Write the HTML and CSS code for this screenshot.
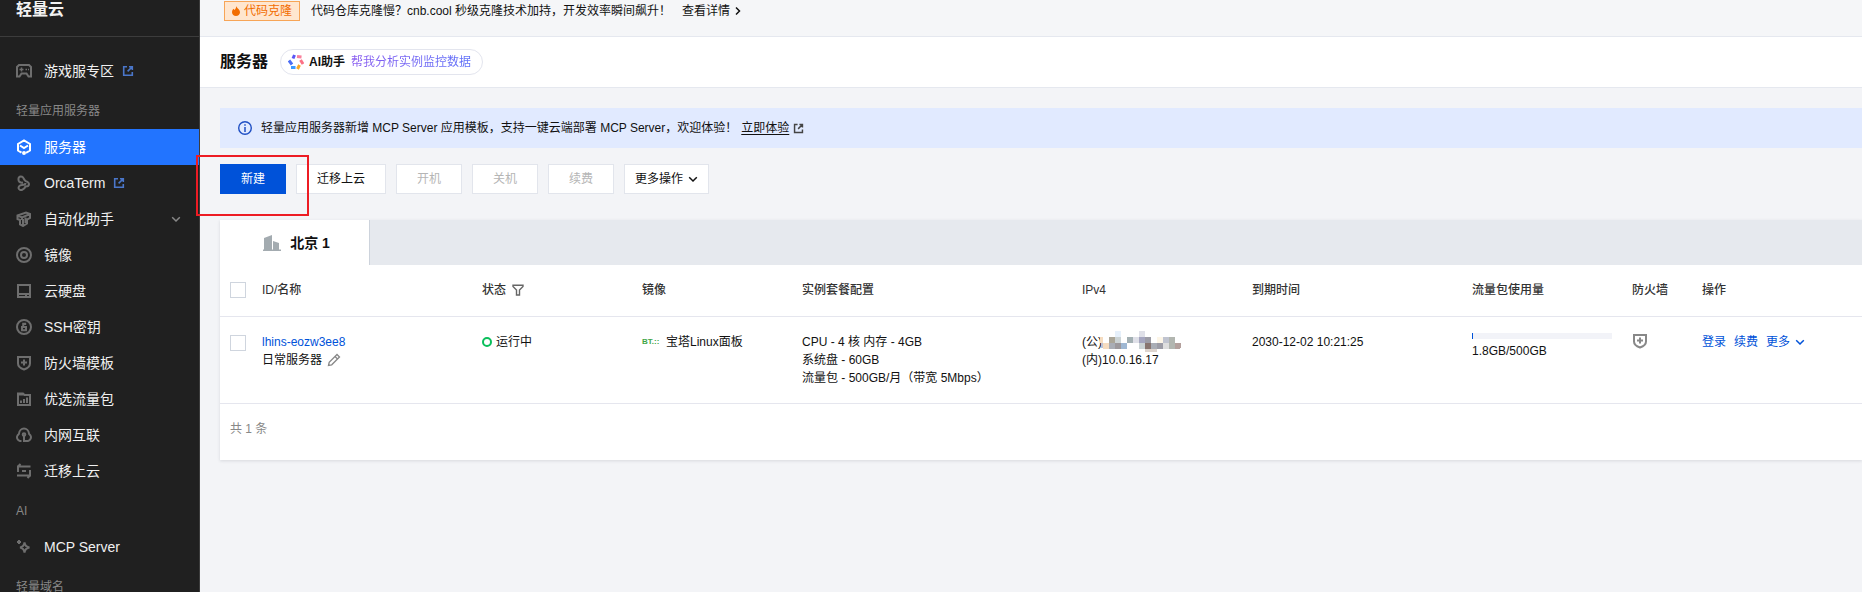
FILE: index.html
```
<!DOCTYPE html>
<html lang="zh-CN">
<head>
    <meta charset="UTF-8">
    <meta name="viewport" content="width=device-width, initial-scale=1.0">
    <title>服务器 - 轻量云</title>
    <link rel="stylesheet" href="styles.css">
</head>
<body>

<svg class="sprite" aria-hidden="true">
    <symbol id="icon-external" viewBox="0 0 12 12">
        <path d="M5 1.7H1.7v8.6h8.6V7M7 1.7h3.3V5M10.3 1.7L5.6 6.4" fill="none" stroke="currentColor" stroke-width="1.6"/>
    </symbol>
    <symbol id="icon-down" viewBox="0 0 10 10">
        <path d="M1.2 3.2L5 7l3.8-3.8" fill="none" stroke="currentColor" stroke-width="1.5"/>
    </symbol>
    <symbol id="icon-shield" viewBox="0 0 16 16">
        <path d="M2 2h12v6.500c0 3-2.500 4.800-6 6-3.500-1.200-6-3-6-6zM8 4.500v6M5 7.500h6" fill="none" stroke="currentColor" stroke-width="2"/>
    </symbol>
</svg>

<div class="layout">
    <nav class="sidebar">
        <div class="sidebar-title">轻量云</div>
        <div class="menu">
            <a class="menu-item" href="#">
                <svg class="menu-icon" viewBox="0 0 16 16"><path d="M3 2h10l2 2v9.500h-2.500L10.500 10.500h-5L3.500 13.500H1V4z"/><path d="M5.500 4.500v4M3.500 6.500h4M9.500 6.500h1.500M12 6.500h1" stroke-width="1.500"/></svg>
                <span>游戏服专区</span>
                <svg class="link-icon"><use href="#icon-external"/></svg>
            </a>
            <div class="menu-group">轻量应用服务器</div>
            <a class="menu-item active" href="#">
                <svg class="menu-icon" viewBox="0 0 16 16"><path d="M5.500 13.700L2 11.500V5L8 1.500 14 5v6.500l-4 2.400M4 6.500L8 9l4-2.500"/><circle cx="8" cy="14" r="1" /></svg>
                <span>服务器</span>
            </a>
            <a class="menu-item" href="#">
                <svg class="menu-icon" viewBox="0 0 16 16"><path d="M3 6.500C1.500 3 3.500.700 6 1.700c2 1 1.500 3 3.500 4.300 2 .800 3.500 1.300 3.500 3s-1.500 2.500-3.500 2.500c-1.500 3.500-5 4.500-6.500 2.500-1.200-2 .500-4 3-4 2 0 3.500-.500 3.500-2M3 6.500c1.200 1.300 2.700 1.300 4 1"/></svg>
                <span>OrcaTerm</span>
                <svg class="link-icon"><use href="#icon-external"/></svg>
            </a>
            <a class="menu-item" href="#">
                <svg class="menu-icon" viewBox="0 0 16 16"><path d="M1.500 4.500L10 1.500l4 1.500v4l-3 1.500v4L7 15l-3-1.500V9L1.500 8zM1.500 4.500L6 6.500 14 3M7 8v6M6 6.500V9M9.500 6.500V12"/></svg>
                <span>自动化助手</span>
                <svg class="menu-arrow"><use href="#icon-down"/></svg>
            </a>
            <a class="menu-item" href="#">
                <svg class="menu-icon" viewBox="0 0 16 16"><circle cx="8" cy="8" r="7"/><circle cx="8" cy="8" r="3"/></svg>
                <span>镜像</span>
            </a>
            <a class="menu-item" href="#">
                <svg class="menu-icon" viewBox="0 0 16 16"><path d="M2 2h12v12H2zM2 11h12M10 11v3"/></svg>
                <span>云硬盘</span>
            </a>
            <a class="menu-item" href="#">
                <svg class="menu-icon" viewBox="0 0 16 16"><circle cx="8" cy="8" r="7"/><path d="M6 8h4v3.200H6zM7.200 8V4.800h2V6"/></svg>
                <span>SSH密钥</span>
            </a>
            <a class="menu-item" href="#">
                <svg class="menu-icon"><use href="#icon-shield"/></svg>
                <span>防火墙模板</span>
            </a>
            <a class="menu-item" href="#">
                <svg class="menu-icon" viewBox="0 0 16 16"><path d="M2 2.500h5L8.500 4H14v10H2zM2 3.500h6M5 9.500V12M8 8v4M11 6.500V12"/></svg>
                <span>优选流量包</span>
            </a>
            <a class="menu-item" href="#">
                <svg class="menu-icon" viewBox="0 0 16 16"><path d="M5.500 14H4C1.500 13.500.300 10.500 1.500 8.500 2 7.500 3 7.300 3 6.500 3.300 3.500 5.500 1.500 8 1.500s4.700 2 5 5c0 .800 1 1 1.500 2 1.200 2-.200 5-2.500 5.500H8V8"/><circle cx="8" cy="7.500" r="1.300"/></svg>
                <span>内网互联</span>
            </a>
            <a class="menu-item" href="#">
                <svg class="menu-icon" viewBox="0 0 16 16"><path d="M2 9V3.500h12.500M2 3.500L4.500 1M14 7v5.500H1M14 12.500L11.500 15M6 8h4"/></svg>
                <span>迁移上云</span>
            </a>
            <div class="menu-group">AI</div>
            <a class="menu-item" href="#">
                <svg class="menu-icon" viewBox="0 0 16 16"><path d="M8.500 3.500C9 6.500 10 8 13.500 8.500 10 9 9 10.500 8.500 13.500 8 10.500 7 9 4 8.500 7 8 8 6.500 8.500 3.500zM3 1v4M1 3h4"/></svg>
                <span>MCP Server</span>
            </a>
            <div class="menu-group">轻量域名</div>
        </div>
    </nav>

    <main class="main">
        <div class="promo">
            <span class="promo-tag">
                <svg class="fire-icon" viewBox="0 0 8 10"><path d="M4.500 0C4.500 2 8 3.500 8 6.200 8 8.500 6.200 10 4 10S0 8.500 0 6.200C0 4.600 1 3.500 1.500 2.800L2.500 4C3.500 3 4.200 1.500 4.500 0z" fill="#f26d00"/></svg>
                代码克隆
            </span>
            <span>代码仓库克隆慢？cnb.cool 秒级克隆技术加持，开发效率瞬间飙升！</span>
            <a class="promo-link" href="#">查看详情
                <svg class="right-icon" viewBox="0 0 6 10"><path d="M1 1.500L4.500 5 1 8.500" fill="none" stroke="currentColor" stroke-width="1.500"/></svg>
            </a>
        </div>

        <header class="page-header">
            <h1>服务器</h1>
            <button type="button" class="ai-button">
                <svg class="ai-icon" viewBox="0 0 16 16" fill="none" stroke-width="3">
                    <path d="M6.500 1L5 4.500" stroke="#5a55f5"/>
                    <path d="M9 2.500l4.500.500" stroke="#f9809c"/>
                    <path d="M12.500 6l2.500 4" stroke="#fb7185"/>
                    <path d="M11.500 11L9.500 15" stroke="#f9a826"/>
                    <path d="M7.500 13.500H3" stroke="#3d9bff"/>
                    <path d="M4 10.500L1 6.500" stroke="#4c6ef5"/>
                </svg>
                <strong>AI助手</strong>
                <span class="ai-text">帮我分析实例监控数据</span>
            </button>
        </header>

        <div class="content">
            <div class="notice">
                <svg class="info-icon" viewBox="0 0 14 14"><circle cx="7" cy="7" r="6.300" fill="none" stroke="#1f4fc4" stroke-width="1.400"/><path d="M7 3.200v1.600M7 6v5" stroke="#1f4fc4" stroke-width="1.500"/></svg>
                <span>轻量应用服务器新增 MCP Server 应用模板，支持一键云端部署 MCP Server，欢迎体验！</span>
                <a href="#">立即体验</a>
                <svg class="notice-icon"><use href="#icon-external"/></svg>
            </div>

            <div class="toolbar">
                <div class="create">
                    <button type="button" class="btn btn-primary">新建</button>
                    <div class="highlight"></div>
                </div>
                <button type="button" class="btn">迁移上云</button>
                <button type="button" class="btn" disabled>开机</button>
                <button type="button" class="btn" disabled>关机</button>
                <button type="button" class="btn" disabled>续费</button>
                <button type="button" class="btn btn-more">更多操作 <svg class="arrow"><use href="#icon-down"/></svg></button>
            </div>

            <section class="card">
                <div class="tabs">
                    <button type="button" class="tab">
                        <svg class="city-icon" viewBox="0 0 18 16"><path d="M1 15V3l8-3v15zM10 15V6l6 2v7zM0 14.500h18V16H0z" fill="#a3abb0"/></svg>
                        北京 1
                    </button>
                </div>
                <table class="servers">
                    <colgroup>
                        <col class="col-check">
                        <col class="col-id">
                        <col class="col-status">
                        <col class="col-image">
                        <col class="col-spec">
                        <col class="col-ip">
                        <col class="col-expire">
                        <col class="col-usage">
                        <col class="col-firewall">
                        <col>
                    </colgroup>
                    <thead>
                        <tr>
                            <th class="check"><input type="checkbox" aria-label="全选"></th>
                            <th>ID/名称</th>
                            <th>
                                <div class="line">状态
                                    <svg class="filter-icon" viewBox="0 0 12 12"><path d="M1 1.200h10v1.300L7.500 6v5h-3V6L1 2.500z" fill="none" stroke="#666" stroke-width="1.400"/></svg>
                                </div>
                            </th>
                            <th>镜像</th>
                            <th>实例套餐配置</th>
                            <th>IPv4</th>
                            <th>到期时间</th>
                            <th>流量包使用量</th>
                            <th>防火墙</th>
                            <th>操作</th>
                        </tr>
                    </thead>
                    <tbody>
                        <tr>
                            <td class="check"><input type="checkbox" aria-label="选择 lhins-eozw3ee8"></td>
                            <td>
                                <a href="#">lhins-eozw3ee8</a>
                                <div class="line">日常服务器
                                    <svg class="edit-icon" viewBox="0 0 14 14"><path d="M1.500 12.500l.700-3.200L10 1.500l2.500 2.500-7.800 7.800zM8 3.500L10.500 6" fill="none" stroke="#888" stroke-width="1.300"/></svg>
                                </div>
                            </td>
                            <td><div class="line status"><i class="dot"></i>运行中</div></td>
                            <td>
                                <div class="line image">
                                    <span class="bt-logo">BT<small>.::</small></span>宝塔Linux面板
                                </div>
                            </td>
                            <td>CPU - 4 核 内存 - 4GB<br>系统盘 - 60GB<br>流量包 - 500GB/月（带宽 5Mbps）</td>
                            <td>
                                <div class="public-ip">(公)
                                    <svg class="mask" viewBox="0 0 81 21" shape-rendering="crispEdges">
                                        <path fill="#fff" d="M3 6h78v12H3z"/>
                                        <path fill="#e6f0fb" d="M15 0h6v6h-6z"/>
                                        <path fill="#dfe0e8" d="M39 0h6v6h-6zM33 6h6v6h-6z"/>
                                        <path fill="#f5dcc0" d="M0 6h3v6H0zM3 12h6v6H3z"/>
                                        <path fill="#bcc3d5" d="M1 12h2v5H1z"/>
                                        <path fill="#aba698" d="M9 6h6v6H9z"/>
                                        <path fill="#cbd3d5" d="M15 6h6v6h-6zM39 12h6v6h-6z"/>
                                        <path fill="#a3b0b3" d="M27 6h6v6h-6z"/>
                                        <path fill="#a5a6c0" d="M39 6h6v6h-6z"/>
                                        <path fill="#9c9ca6" d="M45 6h6v6h-6zM57 12h6v6h-6z"/>
                                        <path fill="#fdf6e8" d="M57 6h6v6h-6z"/>
                                        <path fill="#c0c4d0" d="M63 6h6v6h-6z"/>
                                        <path fill="#b2b6b0" d="M69 6h6v12h-6z"/>
                                        <path fill="#a9adb5" d="M9 12h6v6H9zM51 12h6v6h-6z"/>
                                        <path fill="#9c989c" d="M15 12h6v6h-6z"/>
                                        <path fill="#9fb8d3" d="M21 12h6v6h-6z"/>
                                        <path fill="#887570" d="M45 12h6v6h-6z"/>
                                        <path fill="#dedede" d="M63 12h6v6h-6z"/>
                                        <path fill="#b3a09c" d="M75 12h6v4l-2 2h-4z"/>
                                        <path fill="#ddd4ce" d="M45 18h12v3H45z"/>
                                    </svg>
                                </div>
                                (内)10.0.16.17
                            </td>
                            <td>2030-12-02 10:21:25</td>
                            <td>
                                <div class="usage"><div class="usage-bar" style="width: 0.36%"></div></div>
                                1.8GB/500GB
                            </td>
                            <td><svg class="firewall-icon"><use href="#icon-shield"/></svg></td>
                            <td>
                                <div class="line actions">
                                    <a href="#">登录</a>
                                    <a href="#">续费</a>
                                    <a href="#">更多 <svg class="arrow"><use href="#icon-down"/></svg></a>
                                </div>
                            </td>
                        </tr>
                    </tbody>
                </table>
                <div class="card-footer">共 1 条</div>
            </section>
        </div>
    </main>
</div>

</body>
</html>
```
FILE: styles.css
```
* {
    box-sizing: border-box;
}
body {
    margin: 0;
    overflow: hidden;
    font-family: "Liberation Sans", "Noto Sans CJK SC", sans-serif;
    font-size: 12px;
    line-height: 18px;
    color: #111;
    background-color: #f3f4f7;
}
a {
    color: #0052d9;
    text-decoration: none;
}
button {
    font: inherit;
    color: inherit;
    cursor: pointer;
}
svg {
    flex: none;
}
.sprite {
    position: absolute;
    width: 0;
    height: 0;
}
.layout {
    display: flex;
    height: 100vh;
}

/* sidebar */
.sidebar {
    flex: none;
    width: 200px;
    overflow: hidden;
    background-color: #202020;
    border-right: 1px solid #3c3c3c;
}
.sidebar-title {
    padding: 0 16px 16px;
    font-size: 16px;
    line-height: 20px;
    font-weight: bold;
    color: #f2f2f2;
    border-bottom: 1px solid #3c3c3c;
}
.menu {
    padding-top: 16px;
}
.menu-item {
    display: flex;
    align-items: center;
    height: 36px;
    padding: 0 18px 0 16px;
    font-size: 14px;
    color: #f0f0f0;
}
.menu-item.active {
    background-color: #2274ff;
    color: #fff;
}
.menu-icon {
    width: 16px;
    height: 16px;
    margin-right: 12px;
    color: #6e6e6e;
    fill: none;
    stroke: currentColor;
    stroke-width: 2;
}
.active .menu-icon {
    color: #fff;
}
.link-icon {
    width: 12px;
    height: 12px;
    margin-left: 8px;
    color: #4a76c9;
}
.menu-arrow {
    width: 10px;
    height: 10px;
    margin-left: auto;
    color: #888;
}
.menu-group {
    height: 40px;
    padding: 0 16px;
    line-height: 44px;
    color: #888;
}

/* top area */
.main {
    flex: 1;
    min-width: 0;
}
.promo {
    display: flex;
    align-items: flex-start;
    gap: 11px;
    height: 37px;
    padding: 1px 24px 0;
    line-height: 20px;
    background-color: #f5f6f8;
    border-bottom: 1px solid #e5e8ef;
}
.promo-tag {
    display: flex;
    align-items: center;
    gap: 4px;
    height: 20px;
    padding: 0 7px;
    color: #f26d00;
    background-color: #ffe6cf;
    border: 1px solid #f7a557;
}
.fire-icon {
    width: 8px;
    height: 10px;
}
.promo-link {
    display: flex;
    align-items: center;
    gap: 5px;
    color: #111;
}
.right-icon {
    width: 6px;
    height: 10px;
}
.page-header {
    display: flex;
    align-items: center;
    gap: 12px;
    height: 51px;
    padding: 0 20px;
    background-color: #fff;
    border-bottom: 1px solid #e5e8ef;
}
.page-header h1 {
    margin: 0;
    font-size: 16px;
    line-height: 24px;
}
.ai-button {
    display: flex;
    align-items: center;
    gap: 5px;
    height: 26px;
    padding: 0 11px 0 7px;
    background-color: #fff;
    border: 1px solid #e3e5ee;
    border-radius: 13px;
}
.ai-icon {
    width: 16px;
    height: 16px;
}
.ai-text {
    color: transparent;
    margin-left: 1px;
    background: linear-gradient(90deg, #8a5cf0, #5b6ef8);
    background-clip: text;
}
.content {
    padding: 20px 0 20px 20px;
}
.notice {
    display: flex;
    align-items: center;
    height: 40px;
    padding: 0 18px;
    background-color: #e1eaff;
}
.notice a {
    margin: 0 4px;
    color: #111;
    text-decoration: underline;
    text-underline-offset: 2px;
}
.info-icon {
    width: 14px;
    height: 14px;
    margin-right: 9px;
}
.notice-icon {
    width: 11px;
    height: 11px;
    color: #444;
}

/* buttons */
.toolbar {
    display: flex;
    gap: 10px;
    margin: 16px 0 26px;
}
.create {
    position: relative;
}
.highlight {
    position: absolute;
    top: -9px;
    left: -24px;
    width: 113px;
    height: 61px;
    border: 2px solid #ed1c24;
    pointer-events: none;
}
.btn {
    height: 30px;
    padding: 0 20px;
    background-color: #fff;
    border: 1px solid #e2e5ec;
}
.btn:disabled {
    color: #b5b5b5;
    cursor: default;
}
.btn-primary {
    color: #fff;
    background-color: #0052d9;
    border-color: #0052d9;
}
.btn-more {
    display: flex;
    align-items: center;
    gap: 5px;
    padding: 0 10px;
}
.arrow {
    width: 10px;
    height: 10px;
}

/* instance list */
.card {
    background-color: #fff;
    box-shadow: 0 1px 3px rgba(54, 58, 80, 0.15);
}
.tabs {
    display: flex;
    height: 45px;
    background-color: #e6e9ee;
}
.tab {
    display: flex;
    align-items: center;
    justify-content: center;
    gap: 9px;
    width: 150px;
    padding: 0 0 0 4px;
    font-size: 14px;
    font-weight: bold;
    background-color: #fff;
    border: 0;
    border-right: 1px solid #cdd3dc;
}
.city-icon {
    width: 18px;
    height: 16px;
}
.servers {
    width: 100%;
    table-layout: fixed;
    border-collapse: separate;
    border-spacing: 0;
}
.col-check { width: 32px; }
.col-id { width: 220px; }
.col-status { width: 160px; }
.col-image { width: 160px; }
.col-spec { width: 280px; }
.col-ip { width: 170px; }
.col-expire { width: 220px; }
.col-usage { width: 160px; }
.col-firewall { width: 70px; }
.servers th,
.servers td {
    padding: 16px 10px;
    text-align: left;
    vertical-align: top;
    white-space: nowrap;
    border-bottom: 1px solid #e5e6ee;
}
.servers th {
    padding-bottom: 17px;
    font-weight: 500;
    color: #333;
}
.servers .check {
    padding: 17px 0 0 10px;
}
.servers td.check {
    padding-top: 18px;
}
.check input {
    appearance: none;
    display: block;
    width: 16px;
    height: 16px;
    margin: 0;
    background-color: #fff;
    border: 1px solid #cfd5de;
}
.line {
    display: flex;
    align-items: center;
    height: 18px;
}
.filter-icon {
    width: 12px;
    height: 12px;
    margin-left: 6px;
}
.edit-icon {
    width: 14px;
    height: 14px;
    margin-left: 5px;
}
.dot {
    width: 10px;
    height: 10px;
    margin-right: 4px;
    border: 2px solid #0abf5b;
    border-radius: 50%;
}
.bt-logo {
    width: 24px;
    font-size: 8px;
    font-weight: bold;
    color: #3fa648;
}
.bt-logo small {
    font-size: 8px;
}
.public-ip {
    position: relative;
}
.mask {
    position: absolute;
    top: -2px;
    left: 18px;
    width: 81px;
    height: 21px;
}
.usage {
    height: 6px;
    margin-bottom: 3px;
    background-color: #f2f3f8;
}
.usage-bar {
    min-width: 1px;
    height: 6px;
    background-color: #0052d9;
}
.firewall-icon {
    display: block;
    width: 16px;
    height: 16px;
    color: #888;
}
.actions {
    gap: 8px;
}
.actions a {
    display: flex;
    align-items: center;
    gap: 5px;
}
.card-footer {
    height: 56px;
    padding: 16px 10px;
    color: #888;
}
```
